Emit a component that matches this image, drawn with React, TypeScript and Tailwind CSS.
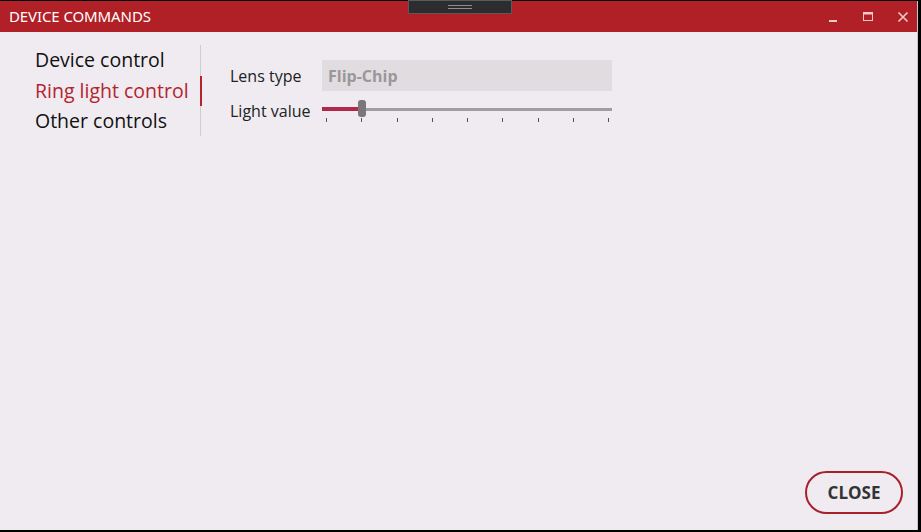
import React from "react";

const navItems = ["Device control", "Ring light control", "Other controls"];

export default function App() {
	const ticks = [0, 1, 2, 3, 4, 5, 6, 7, 8];

	return (
		<div className="w-[921px] h-[532px] bg-black pt-px pr-[3px] pb-[2px] font-['Open_Sans',sans-serif]">
			<div className="relative w-full h-full flex flex-col bg-[#efebf0] border-r border-[#c8c4c8]">
				<header className="h-[31px] shrink-0 bg-[#b11f27] flex items-center justify-between pl-[9px] pr-[7px]">
					<div className="text-white text-[15px] tracking-[-0.1px] font-['Noto_Sans',sans-serif]">
						DEVICE COMMANDS
					</div>
					<div className="flex items-center gap-[21px]">
						<svg width="14" height="14" viewBox="0 0 14 14" className="mt-[2px]">
							<rect x="3" y="9" width="8" height="2" fill="#f1c9cb" />
						</svg>
						<svg width="14" height="14" viewBox="0 0 14 14">
							<rect x="2.5" y="2.5" width="9" height="8" fill="none" stroke="#f1c9cb" strokeWidth="1" />
							<rect x="2.5" y="2.5" width="9" height="2" fill="#f1c9cb" />
						</svg>
						<svg width="14" height="14" viewBox="0 0 14 14">
							<path d="M2.5 2.5 L11.5 11.5 M11.5 2.5 L2.5 11.5" stroke="#f1c9cb" strokeWidth="1.6" />
						</svg>
					</div>
				</header>

				{/* drag grip */}
				<div className="absolute left-[408px] -top-px w-[104px] h-[14px] bg-[#2d2d30] border border-[#5a5a5e] flex flex-col items-center justify-center gap-[2px]">
					<div className="w-[24px] h-px bg-[#8d8d92]" />
					<div className="w-[24px] h-px bg-[#8d8d92]" />
				</div>

				<div className="flex-1 flex pt-[13px]">
					<nav className="w-[202px] shrink-0 flex">
						<div className="flex-1 pl-[35px] flex flex-col text-[19.5px] leading-[30.5px] text-[#111]">
							{navItems.map((item, i) => (
								<div key={item} className={i === 1 ? "text-[#b3242e]" : ""}>
									{item}
								</div>
							))}
						</div>
						<div className="w-[3px] h-[91px] flex flex-col items-center">
							<div className="w-px h-[31px] bg-[#cfcbcf]" />
							<div className="w-[2px] h-[30px] bg-[#b3242e]" />
							<div className="w-px h-[30px] bg-[#cfcbcf]" />
						</div>
					</nav>

					<div className="flex flex-col pl-[28px] pt-[15px] gap-[8px] text-[16px] text-[#222]">
						<div className="flex items-center">
							<div className="w-[92px]">Lens type</div>
							<div className="w-[290px] h-[31px] bg-[#e0dce0] flex items-center pl-[6px] text-[#9a979a] font-bold">
								Flip-Chip
							</div>
						</div>
						<div className="flex items-center">
							<div className="w-[92px]">Light value</div>
							<div className="relative w-[290px] h-[22px]">
								<div className="absolute left-0 right-0 top-[8px] h-[3px] bg-[#a09ca0]" />
								<div className="absolute left-0 w-[36px] top-[7px] h-[4px] bg-[#b0284a]" />
								<div className="absolute left-[36px] top-0 w-[8px] h-[17px] rounded-[3px] bg-[#7a777a]" />
								<div className="absolute left-[4px] right-[3px] top-[18px] flex justify-between">
									{ticks.map((t) => (
										<div key={t} className="w-px h-[4px] bg-[#555]" />
									))}
								</div>
							</div>
						</div>
					</div>
				</div>

				<div className="flex justify-end pr-[14px] pb-[16px]">
					<button className="w-[98px] h-[43px] rounded-full border-[2.5px] border-[#a8202a] text-[#333] font-bold text-[17px] font-['Open_Sans',sans-serif]">
						CLOSE
					</button>
				</div>
			</div>
		</div>
	);
}
